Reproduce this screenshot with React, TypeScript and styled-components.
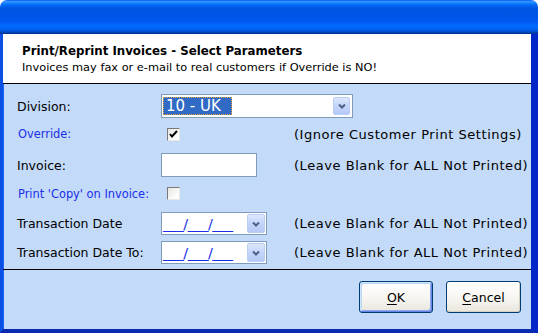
import React from 'react'
import styled, { createGlobalStyle } from 'styled-components'

const GlobalStyle = createGlobalStyle`
  html, body {
    margin: 0;
    padding: 0;
    background: #ffffff;
  }
  body {
    font-family: "DejaVu Sans", Tahoma, sans-serif;
  }
`

const Window = styled.div`
  width: 538px;
  height: 333px;
  display: flex;
  flex-direction: column;
  overflow: hidden;
`

const TitleBar = styled.div`
  height: 34px;
  flex: none;
  border-radius: 7px 7px 0 0;
  background: linear-gradient(
    to bottom,
    #0058ee 0%,
    #3593ff 4%,
    #288eff 7%,
    #127dff 10%,
    #036ffc 14%,
    #0262ee 18%,
    #0057e5 24%,
    #0054e3 30%,
    #0055eb 56%,
    #005bf5 66%,
    #026afe 76%,
    #0062ef 86%,
    #0052d6 92%,
    #0040ab 96%,
    #003092 100%
  );
`

const Frame = styled.div`
  flex: 1;
  display: flex;
  flex-direction: column;
  border-left: 3px solid #0a4fe6;
  border-right: 7px solid #0026c8;
  border-bottom: 4px solid #0a2bb0;
  box-shadow: inset 1px 0 0 #1a66f0;
  background: #c3daf9;
`

const Header = styled.div`
  flex: none;
  height: 50px;
  box-sizing: border-box;
  background: #ffffff;
  border-bottom: 1px solid #000000;
  padding: 9px 0 0 19px;
`

const Title = styled.div`
  font-weight: bold;
  font-size: 11.8px;
  line-height: 16px;
  color: #000;
`

const Subtitle = styled.div`
  font-size: 11.35px;
  line-height: 17px;
  color: #000;
`

const Form = styled.div`
  display: grid;
  grid-template-columns: 144px 131px 1fr;
  grid-template-rows: 24px 32px 30px 27px 33px 25px;
  align-items: center;
  padding: 10px 0 0 14px;
  height: 186px;
  box-sizing: border-box;
  border-bottom: 1px solid #000000;
`

const Label = styled.div<{ $blue?: boolean }>`
  font-size: ${p => (p.$blue ? '11.4px' : '12.5px')};
  color: ${p => (p.$blue ? '#1a2fe8' : '#000000')};
  padding-left: ${p => (p.$blue ? '1px' : '0')};
  white-space: nowrap;
`

const Hint = styled.div`
  font-size: 13px;
  letter-spacing: 0.55px;
  color: #000;
  padding-left: 2px;
  white-space: nowrap;
`

const Select = styled.div`
  grid-column: span 2;
  width: 192px;
  height: 24px;
  box-sizing: border-box;
  border: 1px solid #7f9db9;
  background: #fff;
  display: flex;
  align-items: center;
  justify-content: space-between;
  padding: 0 2px 0 1px;
`

const Selected = styled.span`
  background: #316ac5;
  color: #ffffff;
  font-size: 15px;
  line-height: 18px;
  padding: 0 3px;
  outline: 1px dotted #e8a33a;
  outline-offset: -1px;
  width: 63px;
`

const DropButton = styled.div<{ $w: number; $h: number }>`
  width: ${p => p.$w}px;
  height: ${p => p.$h}px;
  box-sizing: border-box;
  border: 1px solid #b9cdf5;
  border-radius: 2px;
  background: linear-gradient(to bottom, #dbe7fe 0%, #c4d5fb 50%, #b5c9f7 100%);
  display: flex;
  align-items: center;
  justify-content: center;
`

const Chevron = () => (
  <svg width="8" height="6" viewBox="0 0 8 6">
    <path d="M1 1.5 L4 4.5 L7 1.5" stroke="#4d6185" strokeWidth="2" fill="none" />
  </svg>
)

const CheckBox = styled.div`
  width: 13px;
  height: 13px;
  margin-left: 6px;
  box-sizing: border-box;
  border: 1px solid #7a7a7a;
  border-right-color: #e8e8e8;
  border-bottom-color: #e8e8e8;
  background: linear-gradient(135deg, #e6e6df 0%, #ffffff 80%);
  display: flex;
  align-items: center;
  justify-content: center;
`

const TextBox = styled.div`
  width: 96px;
  height: 24px;
  box-sizing: border-box;
  border: 1px solid #7f9db9;
  background: #fff;
`

const DateBox = styled.div`
  width: 106px;
  height: 23px;
  box-sizing: border-box;
  border: 1px solid #7f9db9;
  background: #fff;
  display: flex;
  align-items: center;
  justify-content: space-between;
  padding: 0 1px;
`

const Mask = styled.span`
  font-size: 14.5px;
  color: #1a2fe8;
  letter-spacing: -0.5px;
  white-space: pre;
`

const Footer = styled.div`
  flex: 1;
  display: flex;
  justify-content: flex-end;
  align-items: flex-start;
  gap: 13px;
  padding: 11px 10px 0 0;
`

const Button = styled.button<{ $default?: boolean }>`
  width: ${p => (p.$default ? '74px' : '75px')};
  height: 32px;
  box-sizing: border-box;
  border: 1px solid #003c74;
  border-radius: 3px;
  background: linear-gradient(to bottom, #ffffff 0%, #f5f4ef 60%, #e8e6dc 100%);
  font-family: "DejaVu Sans", Tahoma, sans-serif;
  font-size: 12.5px;
  color: #000;
  padding: 0;
  box-shadow: ${p =>
    p.$default
      ? 'inset 1px 1px 0 #cee7ff, inset -1px -1px 0 #6982ee, inset 2px 2px 0 #bcd4f6, inset -2px -2px 0 #89ade4'
      : 'inset -1px -1px 0 #d6d0c5'};
  u {
    text-decoration: underline;
    text-underline-offset: 2px;
  }
`

export default function App() {
  return (
    <>
      <GlobalStyle />
      <Window>
        <TitleBar />
        <Frame>
          <Header>
            <Title>Print/Reprint Invoices - Select Parameters</Title>
            <Subtitle>Invoices may fax or e-mail to real customers if Override is NO!</Subtitle>
          </Header>
          <Form>
            <Label>Division:</Label>
            <Select>
              <Selected>10 - UK</Selected>
              <DropButton $w={17} $h={18}>
                <Chevron />
              </DropButton>
            </Select>

            <Label $blue>Override:</Label>
            <CheckBox>
              <svg width="9" height="9" viewBox="0 0 9 9">
                <path d="M1 4 L3 6.5 L8 1" stroke="#000" strokeWidth="2" fill="none" />
              </svg>
            </CheckBox>
            <Hint>(Ignore Customer Print Settings)</Hint>

            <Label>Invoice:</Label>
            <TextBox />
            <Hint>(Leave Blank for ALL Not Printed)</Hint>

            <Label $blue>Print 'Copy' on Invoice:</Label>
            <CheckBox />
            <div />

            <Label>Transaction Date</Label>
            <DateBox>
              <Mask>___/___/___</Mask>
              <DropButton $w={18} $h={19}>
                <Chevron />
              </DropButton>
            </DateBox>
            <Hint>(Leave Blank for ALL Not Printed)</Hint>

            <Label>Transaction Date To:</Label>
            <DateBox>
              <Mask>___/___/___</Mask>
              <DropButton $w={18} $h={19}>
                <Chevron />
              </DropButton>
            </DateBox>
            <Hint>(Leave Blank for ALL Not Printed)</Hint>
          </Form>
          <Footer>
            <Button $default>
              <u>O</u>K
            </Button>
            <Button>
              <u>C</u>ancel
            </Button>
          </Footer>
        </Frame>
      </Window>
    </>
  )
}
